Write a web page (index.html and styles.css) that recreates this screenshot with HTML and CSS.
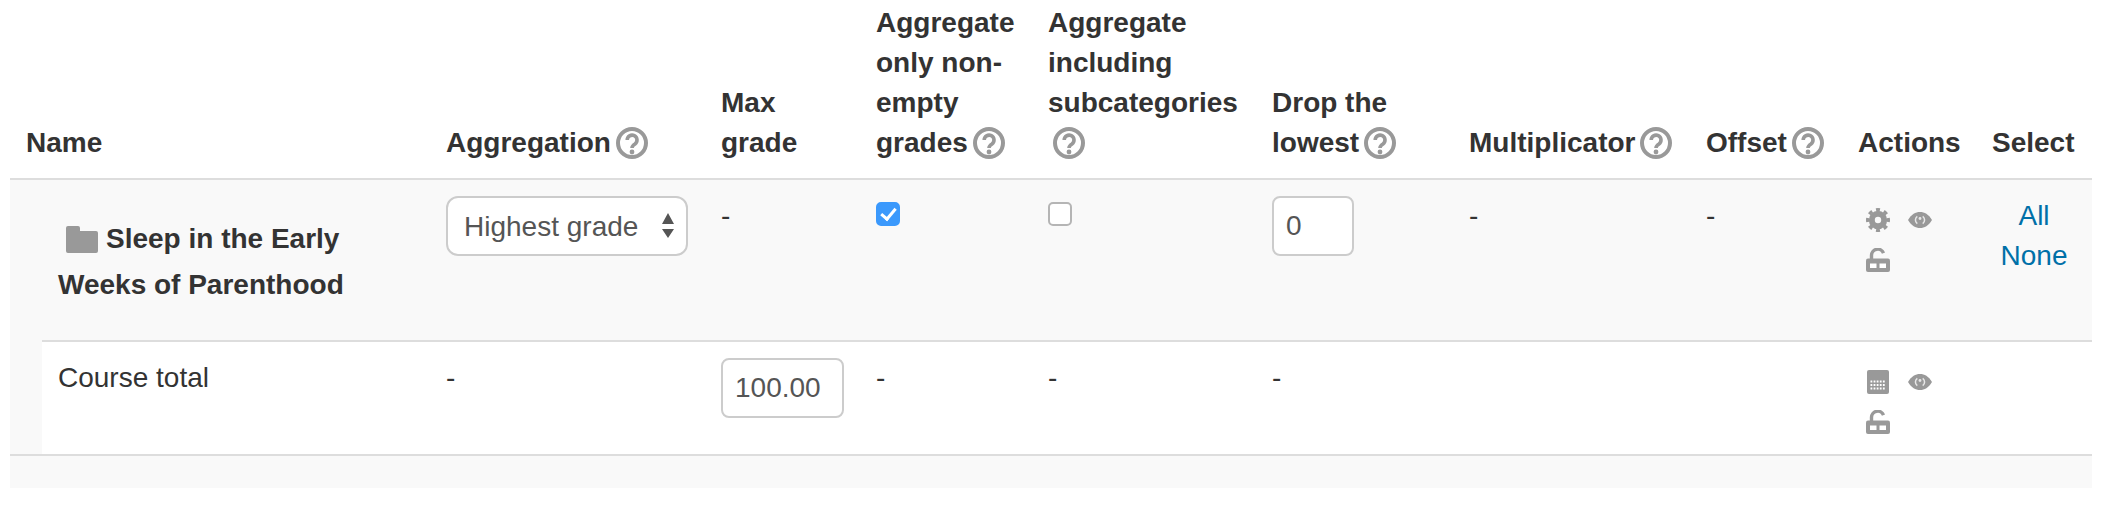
FILE: index.html
```html
<!DOCTYPE html>
<html lang="en">
<head>
  <meta charset="UTF-8" />
  <meta name="viewport" content="width=device-width, initial-scale=1.0" />
  <title>Grades setup</title>
  <link rel="stylesheet" href="styles.css">
</head>
<body>

  <!-- shared icons -->
  <svg class="icon-defs" aria-hidden="true">
    <symbol id="i-help" viewBox="0 0 32 32">
      <circle cx="16" cy="16" r="14" fill="#fff" stroke="#999" stroke-width="4" />
      <path d="M11.200 13a4.900 4.900 0 1 1 7.800 4c-1.800 1.200-3 2.100-3 4" fill="none" stroke="#999" stroke-width="3.600" />
      <circle cx="16" cy="25" r="2.400" fill="#999" />
    </symbol>
    <symbol id="i-gear" viewBox="0 0 24 24">
      <circle cx="12" cy="12" r="10.400" fill="none" stroke="#999" stroke-width="3.200" pathLength="32" stroke-dasharray="2 2" stroke-dashoffset="1" />
      <circle cx="12" cy="12" r="6.200" fill="none" stroke="#999" stroke-width="6" />
    </symbol>
    <symbol id="i-eye" viewBox="0 0 24 24">
      <path d="M0 12C3.500 6.300 7.500 4 12 4S20.500 6.300 24 12C20.500 17.700 16.500 20 12 20S3.500 17.700 0 12Z" fill="#999" />
      <path d="M9.300 15.700A4.600 4.600 0 0 1 9.300 8.300M14.700 8.300A4.600 4.600 0 0 1 14.700 15.700" fill="none" stroke="#e8e8e8" stroke-width="1.500" />
      <circle cx="12" cy="10.500" r="1.400" fill="#e8e8e8" />
    </symbol>
    <symbol id="i-lock" viewBox="0 0 24 24">
      <path d="M5.500 11V7.500a6.200 6.200 0 0 1 12-2.300" fill="none" stroke="#999" stroke-width="3.400" />
      <rect x="0" y="10.500" width="24" height="13.500" rx="2" fill="#999" />
      <rect x="4" y="15.500" width="6.500" height="4.500" fill="#fff" />
      <rect x="13.500" y="15.500" width="6.500" height="4.500" fill="#fff" />
    </symbol>
    <symbol id="i-calc" viewBox="0 0 24 24">
      <rect x="1" y="0" width="22" height="24" rx="2" fill="#999" />
      <path d="M4.500 11.500H20M4.500 15H20M4.500 18.500H20" fill="none" stroke="#fff" stroke-width="1.800" stroke-dasharray="1.800 1.300" />
    </symbol>
  </svg>

  <table class="grades">
    <colgroup>
      <col class="c-space"><col class="c-name"><col class="c-agg"><col class="c-max"><col class="c-nonempty">
      <col class="c-incl"><col class="c-drop"><col class="c-mult"><col class="c-offset"><col class="c-actions"><col class="c-select">
    </colgroup>
    <thead>
      <tr>
        <th colspan="2">Name</th>
        <th>Aggregation<svg class="help"><use href="#i-help" /></svg></th>
        <th>Max grade</th>
        <th>Aggregate only non-empty grades<svg class="help"><use href="#i-help" /></svg></th>
        <th>Aggregate including subcategories<svg class="help"><use href="#i-help" /></svg></th>
        <th>Drop the lowest<svg class="help"><use href="#i-help" /></svg></th>
        <th>Multiplicator<svg class="help"><use href="#i-help" /></svg></th>
        <th>Offset<svg class="help"><use href="#i-help" /></svg></th>
        <th>Actions</th>
        <th>Select</th>
      </tr>
    </thead>
    <tbody>
      <tr class="category">
        <td class="spacer" rowspan="2"></td>
        <td class="cat-name">
          <svg class="folder" viewBox="0 0 32 27"><path d="M0 2a2 2 0 0 1 2-2h10a2 2 0 0 1 2 2v3h16a2 2 0 0 1 2 2v18a2 2 0 0 1-2 2H2a2 2 0 0 1-2-2Z" fill="#999" /></svg>Sleep in the Early Weeks of Parenthood
        </td>
        <td>
          <div class="select-box">
            <select class="field agg-select">
              <option>Highest grade</option>
            </select>
            <svg class="arrows" viewBox="0 0 12 25"><path d="M6 0l6 11H0ZM0 16h12L6 25Z" fill="#555" /></svg>
          </div>
        </td>
        <td class="dash">-</td>
        <td><input class="check" type="checkbox" checked></td>
        <td><input class="check" type="checkbox"></td>
        <td><input class="field drop-input" type="text" value="0"></td>
        <td class="dash">-</td>
        <td class="dash">-</td>
        <td>
          <div class="actions">
            <svg class="act"><use href="#i-gear" /></svg>
            <svg class="act"><use href="#i-eye" /></svg>
            <svg class="act"><use href="#i-lock" /></svg>
          </div>
        </td>
        <td class="select-links">
          <a href="#all">All</a><br>
          <a href="#none">None</a>
        </td>
      </tr>
      <tr>
        <td>Course total</td>
        <td>-</td>
        <td><input class="field max-input" type="text" value="100.00"></td>
        <td>-</td>
        <td>-</td>
        <td>-</td>
        <td></td>
        <td></td>
        <td>
          <div class="actions">
            <svg class="act"><use href="#i-calc" /></svg>
            <svg class="act"><use href="#i-eye" /></svg>
            <svg class="act"><use href="#i-lock" /></svg>
          </div>
        </td>
        <td></td>
      </tr>
      <tr class="foot-row">
        <td colspan="11"></td>
      </tr>
    </tbody>
  </table>

</body>
</html>
```

FILE: styles.css
```css
/* Reset and base styles */
* { margin: 0; padding: 0; }
body { font-family: 'Liberation Sans', Arial, sans-serif; font-size: 28px; line-height: 40px; color: #333; background: #fff; padding: 3px 32px 0 10px; }
a { color: #0070a8; text-decoration: none; }
.icon-defs { display: none; }

/* Table */
.grades { width: 2082px; table-layout: fixed; border-collapse: separate; border-spacing: 0; }
.grades th { font-weight: bold; text-align: left; vertical-align: bottom; padding: 0 16px 15px; }
.grades td { vertical-align: top; padding: 16px; border-top: 2px solid #ddd; }

.c-space { width: 32px; }
.c-name { width: 388px; }
.c-agg { width: 275px; }
.c-max { width: 155px; }
.c-nonempty { width: 172px; }
.c-incl { width: 224px; }
.c-drop { width: 197px; }
.c-mult { width: 237px; }
.c-offset { width: 152px; }
.c-actions { width: 134px; }
.c-select { width: 116px; }

.help { width: 32px; height: 32px; margin-left: 5px; vertical-align: -7px; }

/* Rows */
.category td { background: #f9f9f9; }
.grades .spacer { background: #f9f9f9; padding: 0; }
.grades .cat-name { font-weight: bold; line-height: 46px; padding: 36px 16px 32px; }
.folder { width: 32px; height: 27px; margin: 0 8px; vertical-align: -5px; }
.select-links { text-align: center; }
.grades .foot-row td { background: #f9f9f9; height: 32px; padding: 0; }

/* Form controls */
.field { display: block; box-sizing: border-box; height: 60px; border: 2px solid #ccc; border-radius: 8px; background: #fff; color: #555; font-family: inherit; font-size: 28px; padding: 0 12px; }
.drop-input { width: 82px; }
.max-input { width: 123px; }
.select-box { position: relative; width: 242px; }
.agg-select { width: 100%; padding: 0 16px; appearance: none; -webkit-appearance: none; border-radius: 12px; }
.arrows { position: absolute; right: 14px; top: 17px; width: 12px; height: 25px; }

.check { display: block; position: relative; box-sizing: border-box; width: 24px; height: 24px; margin-top: 6px; appearance: none; -webkit-appearance: none; border: 2px solid #b5b5b5; border-radius: 5px; background: #fff; }
.check:checked { background: #3b99fc; border-color: #3b99fc; }
.check:checked::after { content: ""; position: absolute; left: 6px; top: 1px; width: 6px; height: 12px; border: solid #fff; border-width: 0 3px 3px 0; transform: rotate(40deg); }

/* Action icons */
.actions { display: flex; flex-wrap: wrap; row-gap: 16px; column-gap: 18px; padding: 12px 8px 4px; }
.act { display: block; width: 24px; height: 24px; }
```
